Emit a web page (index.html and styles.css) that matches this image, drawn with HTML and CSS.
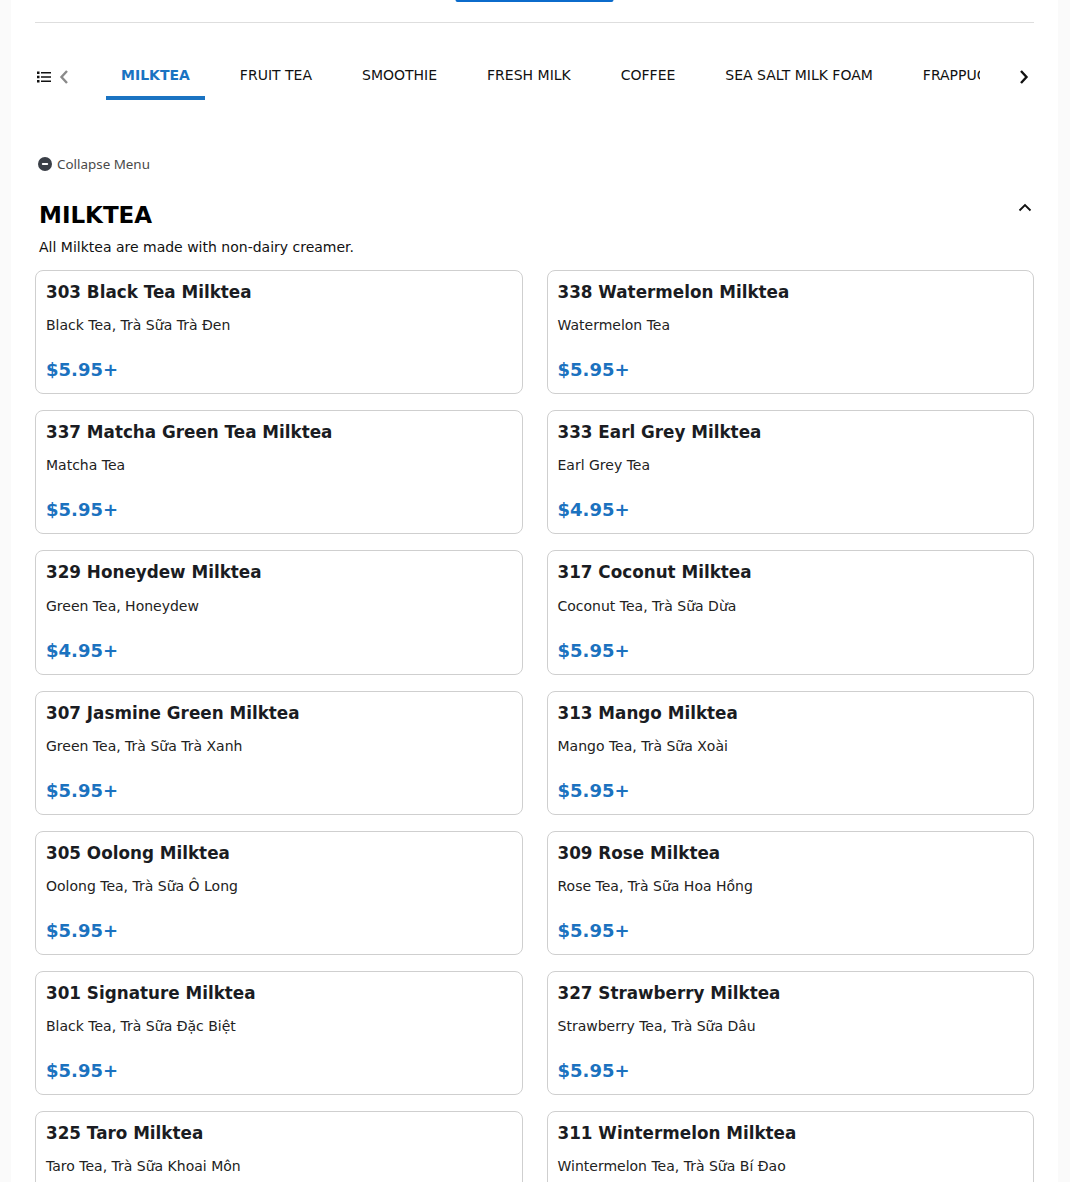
FILE: index.html
```html
<!DOCTYPE html>
<html lang="en">
<head>
<meta charset="utf-8">
<title>Menu</title>
<link rel="stylesheet" href="styles.css">
</head>
<body>
<main class="page">
  <div class="top">
    <div class="top-button"></div>
  </div>
  <nav class="tabs">
    <div class="tab-controls">
      <svg class="icon-list" width="14" height="12" viewBox="0 0 14 12"><path d="M0 .5h2.500v2.500H0zM0 4.750h2.500v2.500H0zM0 9h2.500v2.500H0z" fill="#111"/><path d="M4 1h10v1.600H4zM4 5.200h10v1.600H4zM4 9.400h10v1.600H4z" fill="#111"/></svg>
      <svg class="icon-prev" width="10" height="16" viewBox="0 0 10 16"><path d="M8 2 2.500 8 8 14" fill="none" stroke="#8a8a8a" stroke-width="2.400"/></svg>
    </div>
    <div class="tab-list">
      <a class="tab tab-active">MILKTEA</a>
      <a class="tab">FRUIT TEA</a>
      <a class="tab">SMOOTHIE</a>
      <a class="tab">FRESH MILK</a>
      <a class="tab">COFFEE</a>
      <a class="tab">SEA SALT MILK FOAM</a>
      <a class="tab">FRAPPUCCINO</a>
    </div>
    <svg class="icon-next" width="10" height="16" viewBox="0 0 10 16"><path d="M2 2 7.500 8 2 14" fill="none" stroke="#111" stroke-width="2.400"/></svg>
  </nav>
  <div class="collapse">
    <svg width="14" height="14" viewBox="0 0 14 14"><circle cx="7" cy="7" r="7" fill="#3a3f47"/><rect x="3.800" y="6" width="6.400" height="2" rx="1" fill="#fff"/></svg>
    <span>Collapse Menu</span>
  </div>
  <section class="category">
    <header class="category-head">
      <h2>MILKTEA</h2>
      <svg width="14" height="9" viewBox="0 0 14 9"><path d="M1.500 7.500 7 2l5.500 5.500" fill="none" stroke="#111" stroke-width="1.800"/></svg>
    </header>
    <p class="category-note">All Milktea are made with non-dairy creamer.</p>
    <div class="items">
      <article class="card"><h3>303 Black Tea Milktea</h3><p class="desc">Black Tea, Trà Sữa Trà Đen</p><p class="price">$5.95+</p></article>
      <article class="card"><h3>338 Watermelon Milktea</h3><p class="desc">Watermelon Tea</p><p class="price">$5.95+</p></article>
      <article class="card"><h3>337 Matcha Green Tea Milktea</h3><p class="desc">Matcha Tea</p><p class="price">$5.95+</p></article>
      <article class="card"><h3>333 Earl Grey Milktea</h3><p class="desc">Earl Grey Tea</p><p class="price">$4.95+</p></article>
      <article class="card"><h3>329 Honeydew Milktea</h3><p class="desc">Green Tea, Honeydew</p><p class="price">$4.95+</p></article>
      <article class="card"><h3>317 Coconut Milktea</h3><p class="desc">Coconut Tea, Trà Sữa Dừa</p><p class="price">$5.95+</p></article>
      <article class="card"><h3>307 Jasmine Green Milktea</h3><p class="desc">Green Tea, Trà Sữa Trà Xanh</p><p class="price">$5.95+</p></article>
      <article class="card"><h3>313 Mango Milktea</h3><p class="desc">Mango Tea, Trà Sữa Xoài</p><p class="price">$5.95+</p></article>
      <article class="card"><h3>305 Oolong Milktea</h3><p class="desc">Oolong Tea, Trà Sữa Ô Long</p><p class="price">$5.95+</p></article>
      <article class="card"><h3>309 Rose Milktea</h3><p class="desc">Rose Tea, Trà Sữa Hoa Hồng</p><p class="price">$5.95+</p></article>
      <article class="card"><h3>301 Signature Milktea</h3><p class="desc">Black Tea, Trà Sữa Đặc Biệt</p><p class="price">$5.95+</p></article>
      <article class="card"><h3>327 Strawberry Milktea</h3><p class="desc">Strawberry Tea, Trà Sữa Dâu</p><p class="price">$5.95+</p></article>
      <article class="card"><h3>325 Taro Milktea</h3><p class="desc">Taro Tea, Trà Sữa Khoai Môn</p><p class="price">$5.95+</p></article>
      <article class="card"><h3>311 Wintermelon Milktea</h3><p class="desc">Wintermelon Tea, Trà Sữa Bí Đao</p><p class="price">$5.95+</p></article>
    </div>
  </section>
</main>
</body>
</html>
```
FILE: styles.css
```css
* { box-sizing: border-box; }
html, body { margin: 0; height: 1182px; overflow: hidden; background: #fafafa; }
body { font-family: "DejaVu Sans", sans-serif; color: #111; }
.page { width: 1047px; margin-left: 11px; padding: 0 24px; background: #fff; min-height: 1182px; }
.top { height: 23px; border-bottom: 1px solid #dedede; display: flex; justify-content: center; }
.top-button { width: 158px; height: 2px; background: #0b6bcb; border-radius: 0 0 4px 4px; transform: translateX(-0.5px); }
.tabs { display: flex; align-items: flex-start; height: 77px; }
.tab-controls { width: 71px; flex: none; padding: 45px 0 0 2px; display: flex; align-items: center; gap: 8px; height: 62px; }
.tab-list { width: 874px; flex: none; display: flex; overflow: hidden; gap: 20px; }
.tab { flex: none; height: 77px; padding: 44px 15px 0; font-size: 14px; line-height: 17px; border-bottom: 4px solid transparent; white-space: nowrap; }
.tab-active { color: #1a73c2; font-weight: 700; border-bottom-color: #1a73c2; }
.icon-next { margin: 46px 0 0 39px; flex: none; }
.collapse { display: flex; align-items: center; gap: 5px; margin: 56px 0 0 3px; height: 16px; font-family: "Noto Sans", sans-serif; font-size: 13.4px; color: #4a4a4a; }
.category-head { display: flex; justify-content: space-between; align-items: flex-start; margin: 29px 2px 0 4px; }
.category-head svg { margin-top: 2px; }
h2 { margin: 0; font-size: 23px; line-height: 29px; font-weight: 700; color: #000; }
.category-note { margin: 7px 0 0 4px; font-size: 14px; line-height: 20px; }
.items { display: grid; grid-template-columns: 1fr 1fr; column-gap: 24px; row-gap: 16px; margin-top: 13px; }
.card { height: 124.18px; border: 1px solid #cfcfcf; border-radius: 8px; padding: 10px; background: #fff; }
h3 { margin: 1px 0 0; font-size: 16.8px; line-height: 1.2; font-weight: 700; color: #1a1c22; }
.desc { margin: 13px 0 0; font-size: 14px; line-height: 20px; color: #222; }
.price { margin: 25px 0 0; font-size: 18px; line-height: 20px; font-weight: 700; color: #1b72bf; }
```
